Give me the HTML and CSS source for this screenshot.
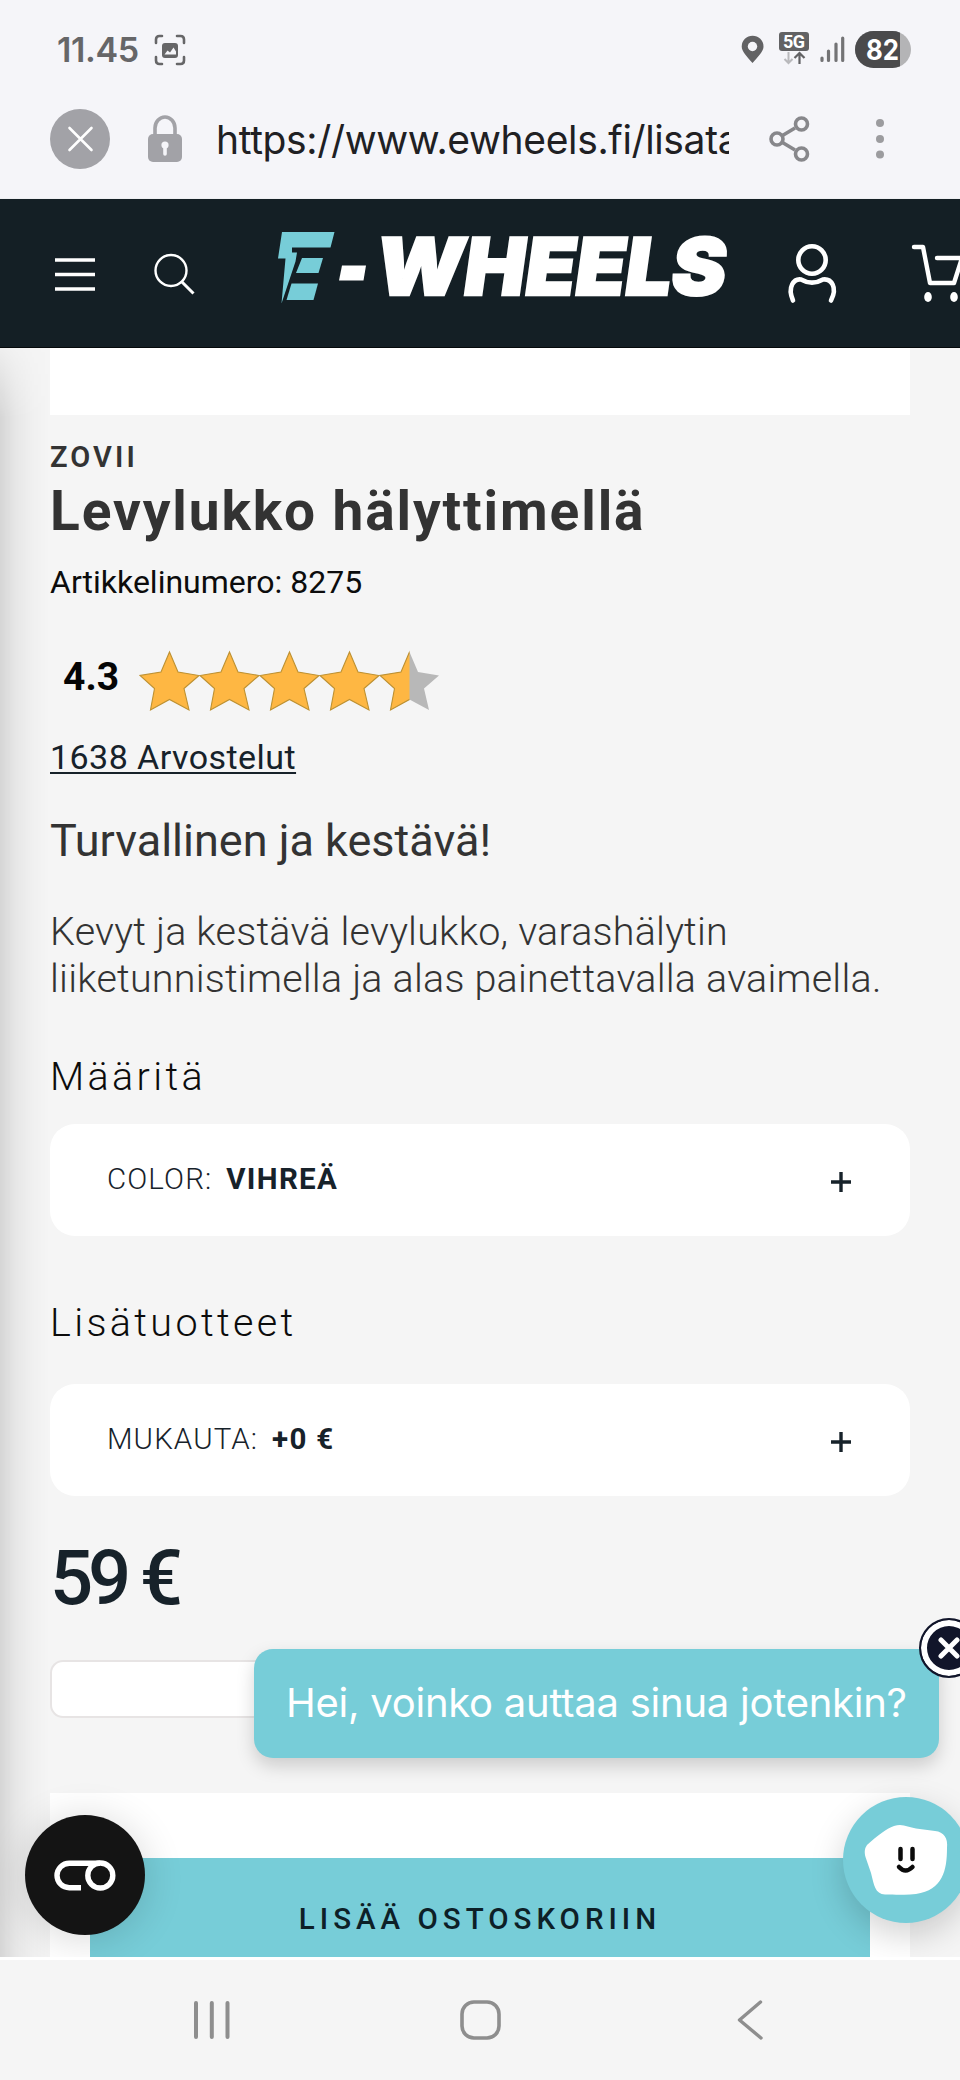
FILE: index.html
```html
<!DOCTYPE html>
<html lang="fi">
<head>
<meta charset="utf-8">
<title>Levylukko hälyttimellä</title>
<link rel="stylesheet" href="styles.css">
</head>
<body>
<div class="screen">
  <div class="chrome">
    <div class="status">
      <span class="clock">11.45</span>
      <svg class="shot" width="32" height="32" viewBox="0 0 32 32"><g fill="none" stroke="#666668" stroke-width="2.6" stroke-linecap="round"><path d="M2 9V5.500Q2 2 5.500 2H8M23 2h3.500Q30 2 30 5.500V9M30 23v3.500Q30 30 26.500 30H23M8 30H5.500Q2 30 2 26.500V23"/></g><rect x="8" y="9" width="16" height="15" rx="3" fill="#666668"/><path d="M10.500 20.500l3-4 2.500 2 3.500-5 2.500 4v3z" fill="#f5f5f9"/></svg>
      <svg class="stat-icons" width="172" height="40" viewBox="740 29 172 40">
        <path d="M752.500 63C747 56.500 741.700 51.500 741.700 46.500a10.900 10.900 0 0 1 21.800 0C763.500 51.500 758 56.500 752.500 63z" fill="#626264"/><circle cx="752.500" cy="46.500" r="4.700" fill="#f5f5f9"/>
        <rect x="779" y="32" width="30" height="19" rx="3" fill="#626264"/>
        <text x="783" y="48" class="net" textLength="22">5G</text>
        <path d="M788.500 52v11M784.500 59l4 4 4-4" fill="none" stroke="#b9b9bc" stroke-width="2"/>
        <path d="M799.500 64V53M794.500 58l5-5 5 5" fill="none" stroke="#626264" stroke-width="2.200"/>
        <path d="M822 58v2.500M828.500 51v9.500M836 44v16.500M842.700 38v22.500" stroke="#737375" stroke-width="3.200" stroke-linecap="round"/>
        <clipPath id="pill"><rect x="855" y="31" width="56" height="37" rx="18.500"/></clipPath>
        <g clip-path="url(#pill)"><rect x="855" y="31" width="56" height="37" fill="#b4b4b6"/><rect x="855" y="31" width="45" height="37" fill="#4a4a4c"/></g>
        <text x="866" y="60" class="batt" textLength="33" lengthAdjust="spacingAndGlyphs">82</text>
      </svg>
    </div>
    <div class="address">
      <svg width="60" height="60" viewBox="0 0 60 60"><circle cx="30" cy="30" r="30" fill="#a2a2a7"/><path d="M19.500 19L41.500 41M41.500 19L19.500 41" stroke="#fff" stroke-width="2.600" stroke-linecap="round"/></svg>
      <svg class="lock" width="36" height="48" viewBox="0 0 36 48"><path d="M8 20V13a10 11 0 0 1 20 0v7" fill="none" stroke="#a2a2a7" stroke-width="3.600"/><rect x="1" y="19" width="34" height="28" rx="5" fill="#a2a2a7"/><circle cx="18" cy="30" r="3.600" fill="#f5f5f9"/><path d="M18 30v9" stroke="#f5f5f9" stroke-width="3.600" stroke-linecap="round"/></svg>
      <div class="url">https://www.ewheels.fi/lisata</div>
      <svg class="share" width="42" height="46" viewBox="0 0 42 46"><g fill="none" stroke="#87878b" stroke-width="3.600"><path d="M13.500 19.500L26 12M13.500 26.500L26 34"/><circle cx="8" cy="23" r="6"/><circle cx="32.500" cy="8" r="6"/><circle cx="32.500" cy="38" r="6"/></g></svg>
      <svg class="dots" width="10" height="42" viewBox="0 0 10 42"><g fill="#9c9c9f"><circle cx="5" cy="5" r="4"/><circle cx="5" cy="21" r="4"/><circle cx="5" cy="36.500" r="4"/></g></svg>
    </div>
  </div>

  <header class="site-header">
    <svg width="960" height="148" viewBox="0 199 960 148">
      <path d="M55 260h40M55 274.500h40M55 289h40" stroke="#fff" stroke-width="3.600"/>
      <circle cx="171" cy="270.500" r="15.500" fill="none" stroke="#fff" stroke-width="2.400"/><path d="M182 282l11.500 11.500" stroke="#fff" stroke-width="3"/>
      <g fill="#77cdd8"><path d="M282 232h52.500l-4 15.500H292v5h5l-1.500 9-14 42L285.500 258.500H278z"/><path d="M302 258h21l-4.500 15h-22.500z"/><path d="M291.500 283.500h26.500l-4.500 16.500h-27z"/></g>
      <path d="M342 265.500h24l-2.500 15h-24.500z" fill="#fff"/>
      <text class="wordmark" transform="translate(373 295) skewX(-8)" textLength="350" lengthAdjust="spacingAndGlyphs">WHEELS</text>
      <g fill="none" stroke="#fff" stroke-linecap="round" stroke-width="4.600"><circle cx="812" cy="260" r="13.700"/><path d="M793 300.500C787 287 794 278.500 801 279.500C808 283.500 816 283.500 823 279.500C831 278.500 838 287 831 300.500"/></g>
      <g fill="none" stroke="#fff" stroke-linecap="round" stroke-linejoin="round" stroke-width="4.400"><path d="M914 247h9l7 36h24l8-25h-25"/></g>
      <ellipse cx="928" cy="297" rx="3.800" ry="5" fill="#fff"/><ellipse cx="954" cy="297" rx="3.800" ry="5" fill="#fff"/>
    </svg>
  </header>

  <main class="product">
    <div class="gallery"></div>
    <div class="brand">ZOVII</div>
    <h1 class="title">Levylukko hälyttimellä</h1>
    <div class="sku">Artikkelinumero: 8275</div>
    <div class="rating">
      <span class="score">4.3</span>
      <svg width="302" height="62" viewBox="0 0 302 62">
        <defs><path id="star" d="M30.500 2L39 22L60 25.500L45 38.500L50 60L30.500 49.500L11.500 60L15.500 38.500L1 25.500L22 22Z"/>
        <clipPath id="half"><rect x="0" y="0" width="30.500" height="62"/></clipPath></defs>
        <g fill="#feb743" stroke="#bd9132" stroke-width="1.100"><use href="#star"/><use href="#star" x="60"/><use href="#star" x="120"/><use href="#star" x="180"/></g>
        <g transform="translate(240 0)"><use href="#star" fill="#b8b8b8"/><use href="#star" fill="#feb743" stroke="#bd9132" stroke-width="1.100" clip-path="url(#half)"/></g>
      </svg>
    </div>
    <a class="reviews">1638 Arvostelut</a>
    <h2 class="lead">Turvallinen ja kestävä!</h2>
    <p class="desc">Kevyt ja kestävä levylukko, varashälytin<br>liiketunnistimella ja alas painettavalla avaimella.</p>
    <h3 class="section">Määritä</h3>
    <div class="option"><span class="opt-name">COLOR:</span><b class="opt-value">VIHREÄ</b><svg class="plus" width="20" height="20" viewBox="0 0 20 20"><path d="M10 0v20M0 10h20" stroke="#17222a" stroke-width="3.400"/></svg></div>
    <h3 class="section extras">Lisätuotteet</h3>
    <div class="option second"><span class="opt-name">MUKAUTA:</span><b class="opt-value">+0 €</b><svg class="plus" width="20" height="20" viewBox="0 0 20 20"><path d="M10 0v20M0 10h20" stroke="#17222a" stroke-width="3.400"/></svg></div>
    <div class="price">59 €</div>
    <div class="field"></div>
    <div class="buy"><button class="cart-button">LISÄÄ OSTOSKORIIN</button></div>
    <div class="edge-shadow"></div>
    <div class="cookie"><svg width="62" height="31" viewBox="0 0 62 31"><g fill="none" stroke="#fff" stroke-width="5.400"><path d="M27 27.800H15.300a12.300 12.300 0 0 1 0-24.600H46"/><circle cx="46.300" cy="15.500" r="12.500"/></g></svg></div>
    <div class="chat"><svg width="126" height="126" viewBox="843 1797 126 126"><path d="M867 1845C878 1835 886 1829 894 1826C902 1823 908 1827 916 1828.500L935 1831C944 1832 948 1838 947 1848C947 1870 943 1890 916 1894C905 1895.500 893 1894 885 1894.500C875 1894 874 1885 871 1873L865.500 1857C864 1851 865 1848 867 1845Z" fill="#fff"/><g fill="none" stroke="#0b0b0b" stroke-width="4.500" stroke-linecap="round"><path d="M900.500 1849v10M912.500 1849v10M899 1867q6.500 7 13.500 0"/></g></svg></div>
    <div class="bubble">Hei, voinko auttaa sinua jotenkin?</div>
    <div class="dismiss"><svg width="22" height="22" viewBox="0 0 22 22"><path d="M3 3l16 16M19 3L3 19" stroke="#fff" stroke-width="5" stroke-linecap="round"/></svg></div>
  </main>

  <nav class="sysnav">
    <svg width="36" height="38" viewBox="0 0 36 38"><path d="M2 2v34M17.800 2v34M33.500 2v34" stroke="#8e8e8e" stroke-width="4" stroke-linecap="round"/></svg>
    <svg width="41" height="40" viewBox="0 0 41 40"><rect x="2" y="2" width="37" height="36" rx="12" fill="none" stroke="#8e8e8e" stroke-width="3.600"/></svg>
    <svg width="26" height="40" viewBox="0 0 26 40"><path d="M23.500 2L2.500 20L24 38" fill="none" stroke="#8e8e8e" stroke-width="3.400" stroke-linecap="round" stroke-linejoin="round"/></svg>
  </nav>
</div>
</body>
</html>
```
FILE: styles.css
```css
* { box-sizing: border-box; }
body { margin: 0; background: #f5f5f5; font-family: Roboto, sans-serif; }
h1, h2, h3, p { margin: 0; }
svg { display: block; flex: none; }
.screen { width: 960px; height: 2080px; overflow: hidden; display: flex; flex-direction: column; }
.chrome { height: 199px; background: #f5f5f9; border-bottom: 1px solid #eeeff2; }
.status { height: 99px; padding: 29px 48px 0 57px; display: flex; align-items: flex-start; }
.clock { font: 600 34px/42px Inter, sans-serif; color: #666668; letter-spacing: -0.4px; width: 97px; }
.shot { margin-top: 5px; }
.stat-icons { margin-left: auto; }
.net { font: 700 18px Roboto, sans-serif; fill: #fff; }
.batt { font: 700 28px Inter, sans-serif; fill: #fff; }
.address { height: 80px; padding-left: 50px; display: flex; align-items: center; }
.lock { margin-left: 37px; }
.url { width: 513px; margin-left: 33px; padding-top: 2px; overflow: hidden; white-space: nowrap; font: 400 39px/60px Inter, sans-serif; letter-spacing: -0.35px; color: #202023; }
.share { margin-left: 40px; }
.dots { margin-left: 64px; }
.site-header { height: 149px; background: #141f25; border-bottom: 1px solid #05090b; overflow: hidden; }
.wordmark { font: 900 79px Inter, sans-serif; fill: #fff; stroke: #fff; stroke-width: 2.5px; }
.product { position: relative; height: 1609px; padding: 0 50px; overflow: hidden; background: #f5f5f5; display: flex; flex-direction: column; align-items: flex-start; flex: none; }
.gallery { width: 860px; height: 67px; background: #fff; flex: none; }
.brand { margin-top: 25px; font-size: 29px; line-height: 34px; font-weight: 600; letter-spacing: 3.1px; color: #333; }
.title { margin-top: 5px; font-size: 55px; line-height: 64px; font-weight: 700; letter-spacing: 1.9px; color: #333; white-space: nowrap; }
.sku { margin-top: 20px; font-size: 32px; line-height: 38px; color: #0c0c0c; }
.rating { margin-top: 49px; height: 62px; padding-left: 13px; display: flex; }
.score { width: 76px; padding-top: 4px; font-size: 39px; line-height: 46px; font-weight: 700; color: #050505; }
.reviews { margin-top: 25px; font-size: 34px; line-height: 40px; letter-spacing: 0.45px; color: #17222a; text-decoration: underline; text-decoration-thickness: 2px; text-underline-offset: 3px; text-decoration-skip-ink: none; }
.lead { margin-top: 37px; font-size: 45px; line-height: 54px; font-weight: 400; color: #333; }
.desc { margin-top: 40px; font-size: 39.5px; line-height: 47px; font-weight: 300; letter-spacing: 0.2px; color: #333; white-space: nowrap; }
.section { margin-top: 52px; font-size: 39.5px; line-height: 46px; font-weight: 300; letter-spacing: 3.35px; color: #0c0c0c; }
.extras { margin-top: 64px; }
.option { margin-top: 24px; width: 860px; height: 112px; border-radius: 25px; background: #fff; display: flex; align-items: center; padding: 0 59px 2px 57px; font-size: 29.5px; line-height: 35px; letter-spacing: 1.1px; color: #17222a; flex: none; }
.second { margin-top: 38px; }
.opt-name { font-weight: 300; }
.opt-value { margin-left: 14px; font-weight: 700; letter-spacing: 1.3px; }
.plus { margin: 5px 0 0 auto; }
.price { margin-top: 38px; font-size: 76px; line-height: 88px; font-weight: 500; letter-spacing: -5.2px; color: #17222a; }
.field { margin-top: 38px; width: 860px; height: 58px; border: 2px solid #e7e4e4; border-radius: 13px; background: #fff; flex: none; }
.buy { margin-top: 75px; width: 860px; height: 164px; padding: 65px 40px 0; background: #fff; flex: none; }
.cart-button { display: block; width: 780px; height: 126px; border: 0; padding: 0 0 4px; background: #77cdd8; font: 500 29.5px/35px Roboto, sans-serif; letter-spacing: 5px; color: #0d2027; }
.edge-shadow { position: absolute; left: 0; top: 0; width: 50px; height: 1609px; background: linear-gradient(to right, rgba(0,0,0,.13), rgba(0,0,0,.06) 30%, rgba(0,0,0,.02) 65%, transparent); -webkit-mask-image: linear-gradient(to bottom, rgba(0,0,0,.2), #000 70px); mask-image: linear-gradient(to bottom, rgba(0,0,0,.2), #000 70px); }
.cookie { position: absolute; left: 25px; top: 1467px; width: 120px; height: 120px; border-radius: 50%; background: #141414; box-shadow: 0 4px 40px rgba(0,0,0,.16); display: grid; place-items: center; }
.chat { position: absolute; left: 843px; top: 1449px; width: 126px; height: 126px; border-radius: 50%; background: #77cdd8; box-shadow: 0 12px 34px rgba(0,0,0,.18); }
.bubble { position: absolute; left: 254px; top: 1301px; width: 685px; height: 109px; border-radius: 19px; background: #77cdd8; box-shadow: 0 8px 18px rgba(0,0,0,.17); color: #fff; font: 400 40px/107px Inter, sans-serif; letter-spacing: -0.25px; padding-left: 32px; white-space: nowrap; }
.dismiss { position: absolute; left: 919px; top: 1270px; width: 60px; height: 60px; border-radius: 50%; background: #11152a; border: 2px solid #11152a; box-shadow: inset 0 0 0 6px #fff; display: grid; place-items: center; }
.sysnav { height: 123px; border-top: 3px solid #fff; background: #f5f5f5; display: flex; align-items: center; padding-left: 194px; }
.sysnav svg + svg { margin-left: 230px; }
.sysnav svg:last-child { margin-left: 236px; }
```
